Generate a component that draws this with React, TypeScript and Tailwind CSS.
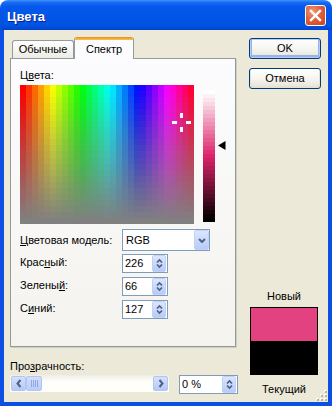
import React from "react";

function Spectrum() {
  const cols = 29;
  const rows = 23;
  const W = 174;
  const H = 139;
  const cells: React.ReactElement[] = [];
  for (let r = 0; r < rows; r++) {
    const y0 = Math.round((r * H) / rows);
    const y1 = Math.round(((r + 1) * H) / rows);
    const s = 100 * (1 - r / (rows - 1));
    for (let c = 0; c < cols; c++) {
      const h = (c / cols) * 360;
      cells.push(
        <rect key={`${r}-${c}`} x={c * 6} y={y0} width={6} height={y1 - y0} fill={`hsl(${h.toFixed(1)},${s.toFixed(1)}%,50%)`} />
      );
    }
  }
  return (
    <svg width={W} height={H} viewBox={`0 0 ${W} ${H}`} shapeRendering="crispEdges" className="block shrink-0">
      {cells}
      <rect x={160} y={28} width={3} height={5} fill="#fff" />
      <rect x={160} y={42} width={3} height={5} fill="#fff" />
      <rect x={152} y={36} width={5} height={3} fill="#fff" />
      <rect x={166} y={36} width={5} height={3} fill="#fff" />
    </svg>
  );
}

function LumBar() {
  const n = 33;
  const items: React.ReactElement[] = [];
  for (let i = 0; i < n; i++) {
    const l = 100 * (1 - i / (n - 1));
    items.push(<rect key={i} x={0} y={i * 4} width={12} height={4} fill={`hsl(337,73%,${l.toFixed(1)}%)`} />);
  }
  return (
    <svg width={12} height={132} viewBox="0 0 12 132" shapeRendering="crispEdges" className="block">
      {items}
    </svg>
  );
}

function SpinArrows() {
  return (
    <svg width="7" height="11" viewBox="0 0 7 11" className="block">
      <polyline points="1,4.5 3.5,2 6,4.5" fill="none" stroke="#4D6185" strokeWidth="1.7" />
      <polyline points="1,6.5 3.5,9 6,6.5" fill="none" stroke="#4D6185" strokeWidth="1.7" />
    </svg>
  );
}

function SpinButton() {
  return (
    <div className="flex h-[17px] w-[14px] shrink-0 items-center justify-center rounded-[2px] border border-[#BFD0FA] bg-[linear-gradient(to_bottom,#DCE6FE,#B8CAF6)]">
      <SpinArrows />
    </div>
  );
}

function SpinField({ value, className }: { value: string; className: string }) {
  return (
    <div className={`flex h-[19px] items-center border border-[#7F9DB9] bg-white pl-[2px] pr-px ${className}`}>
      <span className="flex-1 leading-[13px]">{value}</span>
      <SpinButton />
    </div>
  );
}

function ScrollBtn({ dir }: { dir: "left" | "right" }) {
  return (
    <div className="flex h-[15px] w-[15px] shrink-0 items-center justify-center rounded-[2px] border border-[#B3C6F3] bg-[linear-gradient(to_bottom,#D6E1FD,#B5C8F6)]">
      <svg width="6" height="9" viewBox="0 0 6 9" className="block">
        {dir === "left" ? (
          <polyline points="4.5,1 1.5,4.5 4.5,8" fill="none" stroke="#4D6185" strokeWidth="2" />
        ) : (
          <polyline points="1.5,1 4.5,4.5 1.5,8" fill="none" stroke="#4D6185" strokeWidth="2" />
        )}
      </svg>
    </div>
  );
}

function Thumb() {
  return (
    <div className="flex h-[15px] w-[16px] shrink-0 items-center justify-center rounded-[2px] border border-[#B3C6F3] bg-[linear-gradient(to_bottom,#D3DFFD,#BACCF7)]">
      <svg width="7" height="7" viewBox="0 0 7 7" shapeRendering="crispEdges" className="block">
        {[0, 2, 4, 6].map((x) => (
          <rect key={x} x={x} y={0} width={1} height={7} fill="#8DA7E4" />
        ))}
      </svg>
    </div>
  );
}

function XPButton({ children, def, className = "" }: { children: React.ReactNode; def?: boolean; className?: string }) {
  return (
    <div
      className={`flex h-[21px] w-[72px] items-center justify-center rounded-[3px] border border-[#003C74] bg-[linear-gradient(to_bottom,#FFFFFF_0%,#F6F5F0_50%,#E8E6DC_90%,#D6D0C5_100%)] ${
        def ? "shadow-[inset_0_0_0_1px_#B6CCF6,inset_0_-1px_0_2px_#97B3EC]" : "shadow-[inset_0_-1px_0_1px_#E3E1D5]"
      } ${className}`}
    >
      {children}
    </div>
  );
}

function TitleBar() {
  return (
    <div className="flex h-[30px] shrink-0 items-center justify-between rounded-t-[8px] bg-[linear-gradient(to_bottom,#3F94FB_0%,#1A6CF4_8%,#0558EB_22%,#0055E6_60%,#0053E2_85%,#0045CC_100%)] pl-[7px] pr-[6px]">
      <span className="pt-[3px] text-[13px] font-bold leading-[15px] text-white [text-shadow:1px_1px_0_#0F1E8A]">Цвета</span>
      <div className="mt-px flex h-[21px] w-[21px] items-center justify-center rounded-[3px] border border-white bg-[radial-gradient(circle_at_35%_30%,#F09A7C_0%,#E0603C_45%,#C9421F_100%)]">
        <svg width="13" height="13" viewBox="0 0 13 13" className="block">
          <line x1="2" y1="2" x2="11" y2="11" stroke="#fff" strokeWidth="2.4" strokeLinecap="square" />
          <line x1="11" y1="2" x2="2" y2="11" stroke="#fff" strokeWidth="2.4" strokeLinecap="square" />
        </svg>
      </div>
    </div>
  );
}

function Grip() {
  return (
    <svg width="11" height="11" viewBox="0 0 11 11" shapeRendering="crispEdges" className="absolute bottom-px right-px block">
      {[
        [9, 1], [9, 5], [5, 5], [9, 9], [5, 9], [1, 9],
      ].map(([x, y], i) => (
        <g key={i}>
          <rect x={x - 1} y={y - 1} width={2} height={2} fill="#FFFFFF" />
          <rect x={x} y={y} width={1.5} height={1.5} fill="#B8B5A8" />
        </g>
      ))}
    </svg>
  );
}

export default function App() {
  return (
    <div className="h-[406px] w-[332px] select-none bg-white font-['Liberation_Sans',Arial,sans-serif] text-[11px] leading-[13px] text-black">
      <div className="flex h-full flex-col">
        <TitleBar />
        <div className="relative flex flex-1 border-x-4 border-b-4 border-[#0C4FE2] bg-[#ECE9D8] pl-[6px]">
          {/* Left column */}
          <div className="flex w-[228px] flex-col pt-[7px]">
            <div className="flex h-[21px] items-end pl-[2px]">
              <div className="flex h-[18px] w-[62px] items-center justify-center rounded-t-[3px] border border-b-0 border-[#919B9C] bg-[linear-gradient(to_bottom,#FFFFFF,#ECEBE5)]">
                Обычные
              </div>
              <div className="relative z-10 -mb-px flex h-[22px] w-[60px] flex-col overflow-hidden rounded-t-[3px] border-x border-[#919B9C] bg-[#FCFCFE]">
                <div className="h-[3px] shrink-0 bg-[linear-gradient(to_bottom,#E68B2C,#FFC73C)]" />
                <div className="flex flex-1 items-center justify-center pb-px">Спектр</div>
              </div>
            </div>
            <div className="flex h-[289px] w-[226px] flex-col border border-[#919B9C] bg-[linear-gradient(to_bottom,#FCFCFE,#F4F3EE)] pl-[9px] shadow-[1px_1px_0_#D0CEC0]">
              <div className="mt-[10px] h-[13px]">
                Ц<u>в</u>ета:
              </div>
              <div className="mt-[3px] flex items-start">
                <Spectrum />
                <div className="relative ml-[9px] mt-[5px] h-[132px] w-[12px]">
                  <LumBar />
                  <svg width="8" height="9" viewBox="0 0 8 9" className="absolute left-[15px] top-[51px] block">
                    <polygon points="0,4.5 7.5,0 7.5,9" fill="#000" />
                  </svg>
                </div>
              </div>
              <div className="mt-[5px] flex h-[22px] items-center">
                <span className="w-[102px]">
                  <u>Ц</u>ветовая модель:
                </span>
                <div className="flex h-[22px] w-[88px] items-center border border-[#7F9DB9] bg-white pl-[3px]">
                  <span className="flex-1">RGB</span>
                  <div className="flex h-full w-[15px] items-center justify-center rounded-[2px] border border-[#BFD0FA] bg-[linear-gradient(to_bottom,#DCE6FE,#B8CAF6)]">
                    <svg width="8" height="5" viewBox="0 0 8 5" className="block">
                      <polyline points="1,1 4,4 7,1" fill="none" stroke="#4D6185" strokeWidth="2" />
                    </svg>
                  </div>
                </div>
              </div>
              <div className="mt-[3px] flex h-[19px] items-center">
                <span className="w-[102px] pb-[2px]">
                  Крас<u>н</u>ый:
                </span>
                <SpinField value="226" className="w-[46px]" />
              </div>
              <div className="mt-[4px] flex h-[19px] items-center">
                <span className="w-[102px] pb-[2px]">
                  Зелены<u>й</u>:
                </span>
                <SpinField value="66" className="w-[46px]" />
              </div>
              <div className="mt-[4px] flex h-[19px] items-center">
                <span className="w-[102px] pb-[2px]">
                  С<u>и</u>ний:
                </span>
                <SpinField value="127" className="w-[46px]" />
              </div>
            </div>
            <div className="mt-[13px] h-[13px]">
              Про<u>з</u>рачность:
            </div>
            <div className="mt-[2px] flex items-start">
              <div className="flex h-[17px] w-[159px] items-center bg-[linear-gradient(to_bottom,#EEEDE5,#FEFEFB_40%,#FEFEFB)] px-px">
                <ScrollBtn dir="left" />
                <Thumb />
                <div className="flex-1" />
                <ScrollBtn dir="right" />
              </div>
              <SpinField value="0 %" className="ml-[10px] w-[59px]" />
            </div>
          </div>

          {/* Right column */}
          <div className="ml-[11px] flex w-[72px] flex-col pb-[6px] pt-[8px]">
            <XPButton def>OK</XPButton>
            <XPButton className="mt-[9px]">Отмена</XPButton>
            <div className="flex-1" />
            <div className="ml-px flex w-[68px] flex-col items-center">
              <div className="h-[13px]">Новый</div>
              <div className="mt-[4px] flex h-[68px] w-[68px] flex-col border border-black">
                <div className="h-[33px] bg-[#E2427F]" />
                <div className="flex-1 bg-black" />
              </div>
              <div className="mt-[8px] h-[13px]">Текущий</div>
            </div>
          </div>
          <Grip />
        </div>
      </div>
    </div>
  );
}
